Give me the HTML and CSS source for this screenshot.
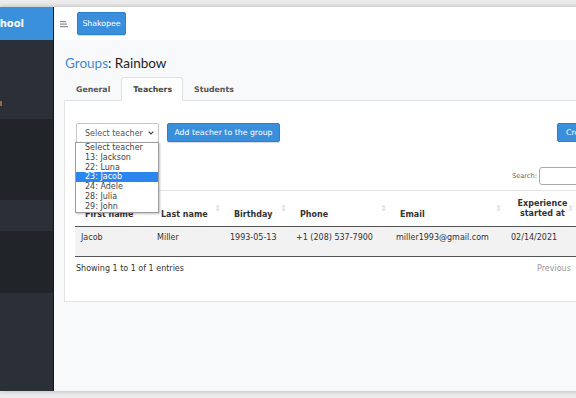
FILE: index.html
```html
<!DOCTYPE html>
<html lang="en">
<head>
  <meta charset="UTF-8" />
  <meta name="viewport" content="width=device-width, initial-scale=1.0" />
  <title>Groups: Rainbow</title>
  <link rel="stylesheet" href="styles.css">
</head>
<body>
  <div class="window">
    <aside class="sidebar">
      <div class="brand"><span>Online School</span></div>
      <div class="side-block light h79"><span class="side-mark"></span></div>
      <div class="side-block dark h81"></div>
      <div class="side-block light h31"></div>
      <div class="side-block dark h62"></div>
      <div class="side-block light fill"></div>
    </aside>
    <div class="main">
      <header class="topbar">
        <svg class="burger" width="8" height="8" viewBox="0 0 8 8">
          <rect x="0" y="1" width="6" height="1.2" fill="#8a8a8a"/>
          <rect x="0" y="3.5" width="7" height="1.2" fill="#8a8a8a"/>
          <rect x="0" y="6" width="8" height="1.2" fill="#8a8a8a"/>
        </svg>
        <button class="btn btn-school">Shakopee</button>
      </header>
      <section class="content">
        <h1 class="page-title"><a href="#">Groups</a>: Rainbow</h1>
        <ul class="tabs">
          <li>General</li>
          <li class="active">Teachers</li>
          <li>Students</li>
        </ul>
        <div class="card">
          <div class="toolbar">
            <div class="select-wrap">
              <div class="select">
                Select teacher
                <svg width="6" height="4" viewBox="0 0 6 4"><path d="M0.7 0.7 L3 3 L5.3 0.7" fill="none" stroke="#444" stroke-width="1.2"/></svg>
              </div>
              <ul class="select-menu">
                <li>Select teacher</li>
                <li>13: Jackson</li>
                <li>22: Luna</li>
                <li class="selected">23: Jacob</li>
                <li>24: Adele</li>
                <li>28: Julia</li>
                <li>29: John</li>
              </ul>
            </div>
            <button class="btn add-btn">Add teacher to the group</button>
            <button class="btn create-btn">Create new teacher</button>
          </div>
          <div class="dt-top">
            <label>Search:</label>
            <input type="search" class="dt-search" />
          </div>
          <table class="dt-table">
            <colgroup>
              <col style="width:76px">
              <col style="width:73px">
              <col style="width:66px">
              <col style="width:100px">
              <col style="width:115px">
              <col style="width:72px">
              <col style="width:90px">
            </colgroup>
            <thead>
              <tr>
                <th>First name</th>
                <th>Last name</th>
                <th>Birthday</th>
                <th>Phone</th>
                <th>Email</th>
                <th class="wrap">Experience started at</th>
                <th>Actions</th>
              </tr>
            </thead>
            <tbody>
              <tr>
                <td>Jacob</td>
                <td>Miller</td>
                <td>1993-05-13</td>
                <td>+1 (208) 537-7900</td>
                <td>miller1993@gmail.com</td>
                <td>02/14/2021</td>
                <td></td>
              </tr>
            </tbody>
          </table>
          <div class="dt-bottom">
            <div class="dt-info">Showing 1 to 1 of 1 entries</div>
            <div class="dt-paginate">
              <span>Previous</span>
              <span class="page current">1</span>
              <span>Next</span>
            </div>
          </div>
        </div>
      </section>
    </div>
  </div>
</body>
</html>
```

FILE: styles.css
```css
html, body {
  margin: 0;
  padding: 0;
  height: 398px;
  overflow: hidden;
  background: #ececec;
  font-family: 'DejaVu Sans', Verdana, sans-serif;
  font-size: 8px;
  color: #333;
}
.window {
  display: flex;
  width: 760px;
  height: 384px;
  margin-top: 7px;
  background: #f8f9fb;
  box-shadow: 0 0 5px rgba(0,0,0,0.25);
}
.sidebar {
  width: 53px;
  flex-shrink: 0;
  display: flex;
  flex-direction: column;
  overflow: hidden;
  border-right: 1px solid #16181b;
}
.brand {
  height: 33px;
  flex-shrink: 0;
  background: #3a90da;
  display: flex;
  align-items: center;
  justify-content: flex-end;
  padding-right: 29px;
  color: #fff;
  font-weight: bold;
  font-size: 10px;
  white-space: nowrap;
}
.side-block {
  flex-shrink: 0;
}
.side-block.light {
  background: #2b3038;
}
.side-block.dark {
  background: #212428;
}
.h79 { height: 79px; }
.h81 { height: 81px; }
.h31 { height: 31px; }
.h62 { height: 62px; }
.fill { flex: 1; }
.side-mark {
  display: block;
  width: 2px;
  height: 5px;
  margin-top: 61px;
  background: #8c6e45;
}
.main {
  flex: 1;
  display: flex;
  flex-direction: column;
}
.topbar {
  height: 33px;
  background: #fff;
  display: flex;
  align-items: center;
  padding-left: 6px;
}
.burger {
  margin-right: 9px;
}
.btn {
  font-family: 'DejaVu Sans', Verdana, sans-serif;
  font-size: 7.8px;
  color: #fff;
  background: #3a8fdc;
  border: 1px solid #2f80cc;
  border-radius: 2px;
  cursor: pointer;
  padding: 0 7px;
  white-space: nowrap;
}
.btn-school {
  height: 23px;
  width: 49px;
  padding: 0;
  box-shadow: 0 1px 1px rgba(0,0,0,0.15);
}
.content {
  padding: 15px 0 0 10px;
}
.page-title {
  margin: 0 0 6px;
  padding-left: 1px;
  font-family: 'Lato', 'Open Sans', sans-serif;
  font-weight: normal;
  font-size: 13.5px;
  line-height: 16px;
  color: #222;
}
.page-title a {
  color: #3d8ad2;
  text-decoration: none;
}
.tabs {
  list-style: none;
  margin: 0;
  padding: 0 0 0 1px;
  display: flex;
  border-bottom: 1px solid #dee2e6;
}
.tabs li {
  padding: 1px 10px 0;
  line-height: 21px;
  border: 1px solid transparent;
  margin-bottom: -1px;
  font-weight: bold;
  font-size: 7.8px;
  color: #555;
  border-radius: 3px 3px 0 0;
}
.tabs li.active {
  background: #fff;
  border-color: #dee2e6 #dee2e6 #fff;
  color: #444;
  padding: 1px 10px 0 11px;
}
.card {
  background: #fff;
  border: 1px solid #e2e5e8;
  border-top: none;
  padding: 22px 0 27px 10px;
}
.toolbar {
  display: flex;
  align-items: flex-start;
  height: 20px;
}
.select-wrap {
  position: relative;
  margin-left: 1px;
  margin-right: 8px;
}
.select {
  width: 83px;
  height: 20px;
  box-sizing: border-box;
  border: 1px solid #c6c6c6;
  border-radius: 2px;
  background: #fff;
  display: flex;
  align-items: center;
  justify-content: space-between;
  padding: 0 4px 0 8px;
  color: #555;
}
.select-menu {
  position: absolute;
  top: 19px;
  left: -1px;
  width: 84px;
  box-sizing: border-box;
  margin: 0;
  padding: 0;
  list-style: none;
  background: #fff;
  border: 1px solid #9d9d9d;
  box-shadow: 1px 1px 2px rgba(0,0,0,0.25);
  z-index: 5;
}
.select-menu li {
  line-height: 9.8px;
  padding-left: 9px;
  color: #444;
}
.select-menu li.selected {
  background: #2a86ee;
  color: #fff;
}
.add-btn {
  height: 19px;
  width: 113px;
  padding: 0;
  box-shadow: 0 1px 1px rgba(0,0,0,0.15);
}
.create-btn {
  height: 19px;
  margin-left: 277px;
  padding: 0 8px;
}
.dt-top {
  margin-top: 24px;
  height: 18px;
  display: flex;
  align-items: center;
  padding-left: 437px;
}
.dt-top label {
  font-size: 6.6px;
  color: #666;
  margin-right: 2px;
}
.dt-search {
  width: 90px;
  height: 18px;
  box-sizing: border-box;
  border: 1px solid #aaa;
  border-radius: 3px;
  margin: 0;
}
.dt-table {
  margin-top: 5px;
  border-collapse: collapse;
  table-layout: fixed;
  width: 592px;
  border-top: 1px solid #e4e4e4;
}
.dt-table th {
  position: relative;
  text-align: left;
  vertical-align: bottom;
  padding: 9px 4px 6px 10px;
  line-height: 10px;
  font-weight: bold;
  color: #333;
  border-bottom: 1px solid #555;
  white-space: nowrap;
  overflow: visible;
}
.dt-table th.wrap {
  white-space: normal;
  text-align: center;
  padding: 8px 7px 7px 10px;
}
.dt-table th::after {
  content: "\21D5";
  position: absolute;
  right: 3px;
  top: 13px;
  font-size: 8px;
  font-weight: normal;
  color: #d4d4d4;
}
.dt-table td {
  vertical-align: top;
  padding: 6px 6px 13px;
  line-height: 10px;
  background: #f2f2f2;
  border-bottom: 1px solid #555;
  white-space: nowrap;
}
.dt-bottom {
  display: flex;
  margin-top: 7px;
  line-height: 10px;
  padding-left: 1px;
}
.dt-info {
  width: 461px;
}
.dt-paginate span {
  color: #999;
  margin-right: 8px;
}
```
